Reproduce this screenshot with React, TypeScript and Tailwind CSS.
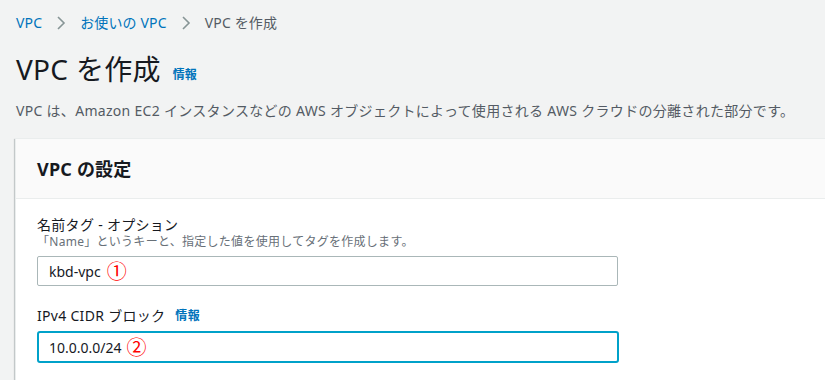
import React from "react";

const font = { fontFamily: '"Noto Sans", "Noto Sans CJK JP", sans-serif' };

function Chevron() {
  return (
    <svg width="10" height="14" viewBox="0 0 10 14" className="mx-[14px]">
      <path d="M2 1l6 6-6 6" fill="none" stroke="#879596" strokeWidth="1.6" />
    </svg>
  );
}

export default function App() {
  return (
    <div className="w-[825px] h-[380px] overflow-hidden bg-[#f2f3f3] text-[#16191f]" style={font}>
      <div className="pl-4 pt-[12px] flex items-center h-[34px] text-[14px] leading-[22px] tracking-[0.15px]">
        <span className="text-[#0073bb]">VPC</span>
        <Chevron />
        <span className="text-[#0073bb]">お使いの VPC</span>
        <Chevron />
        <span className="text-[#545b64]">VPC を作成</span>
      </div>
      <div className="pl-4 mt-[17px] flex items-end h-[36px]">
        <h1 className="text-[28px] leading-[36px] font-normal tracking-[0.3px]">VPC を作成</h1>
        <span className="ml-[12px] mb-[4px] text-[12px] font-bold text-[#0073bb] leading-[16px]">情報</span>
      </div>
      <p className="pl-4 mt-[14px] text-[14px] leading-[20px] text-[#545b64] tracking-[0.3px] whitespace-nowrap">
        VPC は、Amazon EC2 インスタンスなどの AWS オブジェクトによって使用される AWS クラウドの分離された部分です。
      </p>
      <div className="ml-[15px] mt-[17px] border-l border-t border-[#eaeded] shadow-[0_1px_1px_0_rgba(0,28,36,0.3),1px_1px_1px_0_rgba(0,28,36,0.15),-1px_1px_1px_0_rgba(0,28,36,0.15)] bg-white">
        <div className="h-[60px] bg-[#fafafa] border-b border-[#eaeded] flex items-center pl-[21px]">
          <h2 className="text-[18px] font-bold leading-[24px] tracking-[0.2px]">VPC の設定</h2>
        </div>
        <div className="pl-[21px] pt-[16px] pb-20">
          <div className="text-[14px] leading-[20px] tracking-[0.3px]">名前タグ - オプション</div>
          <div className="text-[12px] leading-[16px] text-[#687078] -mt-[1px] tracking-[0.28px]">「Name」というキーと、指定した値を使用してタグを作成します。</div>
          <div className="mt-[6px] w-[581px] h-[30px] border border-[#aab7b8] rounded-[2px] flex items-center pl-[11px] text-[14px]">
            <span>kbd-vpc</span>
            <span className="ml-[6px] text-[#ff0000] text-[20px] leading-[20px]" style={{ fontFamily: '"Noto Sans CJK JP", serif' }}>①</span>
          </div>
          <div className="mt-[20px] flex items-center text-[14px] leading-[20px] tracking-[0.3px]">
            <span>IPv4 CIDR ブロック</span>
            <span className="ml-[10px] text-[12px] font-bold text-[#0073bb]">情報</span>
          </div>
          <div className="mt-[5px] w-[582px] h-[32px] border-2 border-[#00a1c9] rounded-[3px] flex items-center pl-[10px] text-[14px]">
            <span>10.0.0.0/24</span>
            <span className="ml-[5px] text-[#ff0000] text-[20px] leading-[20px]" style={{ fontFamily: '"Noto Sans CJK JP", serif' }}>②</span>
          </div>
        </div>
      </div>
    </div>
  );
}
